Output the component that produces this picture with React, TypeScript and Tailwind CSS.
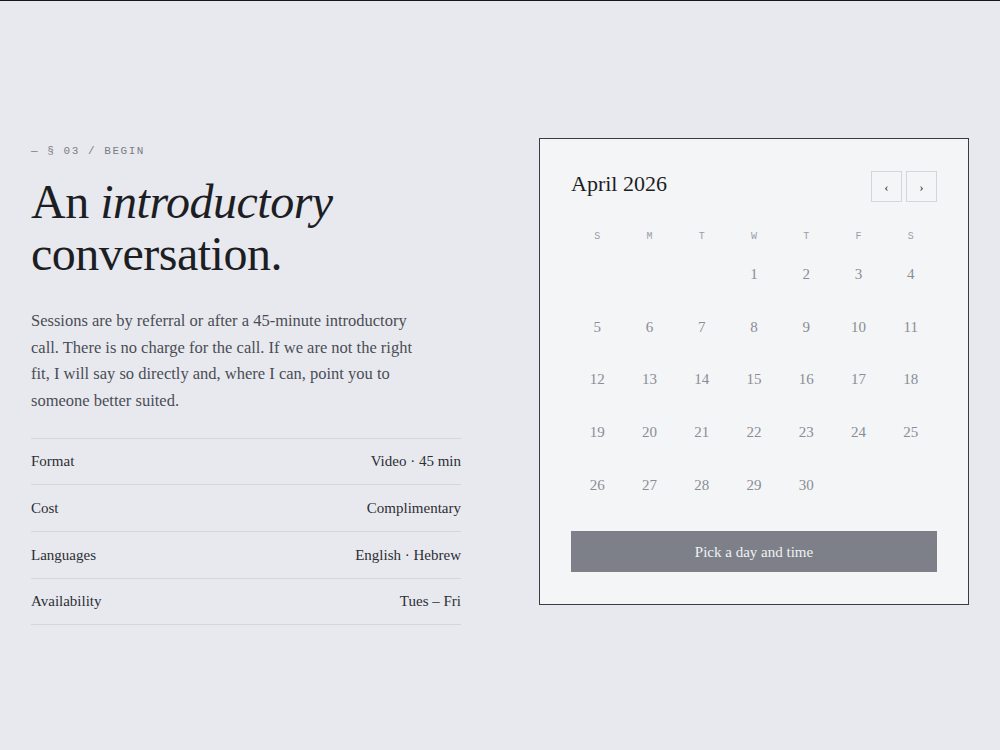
import React from "react";

const serif = { fontFamily: '"Liberation Serif", "DejaVu Serif", serif' };
const mono = { fontFamily: '"Liberation Mono", "DejaVu Sans Mono", monospace' };

const rows: [string, string][] = [
  ["Format", "Video · 45 min"],
  ["Cost", "Complimentary"],
  ["Languages", "English · Hebrew"],
  ["Availability", "Tues – Fri"],
];

const days: (number | null)[] = [null, null, null, 1, 2, 3, 4];
for (let d = 5; d <= 30; d++) days.push(d);

export default function App() {
  return (
    <div className="min-h-[750px] w-full bg-[#e8e9ee] border-t border-[#16171d]" style={serif}>
      <div className="flex gap-[78px] px-[31px] pt-[137px]">
        <div className="w-[430px] pt-[6px]">
          <div className="text-[11px] tracking-[0.14em] text-[#7a7d86] leading-[14px]" style={mono}>
            — § 03 / BEGIN
          </div>
          <h1 className="mt-[18px] text-[48px] leading-[52px] text-[#1d1e24] font-normal tracking-[-0.01em]">
            An <em className="italic">introductory</em>
            <br />
            conversation.
          </h1>
          <p className="mt-[28px] w-[400px] text-[16.5px] leading-[26.7px] text-[#4a4d56]">
            Sessions are by referral or after a 45-minute introductory call. There is no charge for the call. If we are not the right fit, I will say so directly and, where I can, point you to someone better suited.
          </p>
          <div className="mt-[23px] border-t border-[#d4d6dc]">
            {rows.map(([k, v]) => (
              <div
                key={k}
                className="flex justify-between items-center h-[46.6px] border-b border-[#d4d6dc] text-[15px] text-[#2c2e35]"
              >
                <span>{k}</span>
                <span>{v}</span>
              </div>
            ))}
          </div>
        </div>
        <div className="w-[430px] h-[467px] border border-[#3a3c44] bg-[#f4f5f7] px-[31px] pt-[32px]">
          <div className="flex items-start justify-between">
            <div className="text-[22px] text-[#1d1e24] leading-[26px]">April 2026</div>
            <div className="flex gap-[4px]">
              <button className="w-[31px] h-[31px] border border-[#d3d5da] flex items-center justify-center text-[13px] text-[#2c2e35]">
                ‹
              </button>
              <button className="w-[31px] h-[31px] border border-[#d3d5da] flex items-center justify-center text-[13px] text-[#2c2e35]">
                ›
              </button>
            </div>
          </div>
          <div className="grid grid-cols-7 mt-[29px] text-[10px] text-[#9a9da5] leading-[12px]" style={mono}>
            {["S", "M", "T", "W", "T", "F", "S"].map((d, i) => (
              <div key={i} className="text-center">
                {d}
              </div>
            ))}
          </div>
          <div className="grid grid-cols-7 mt-[5px]">
            {days.map((d, i) => (
              <div key={i} className="h-[52.7px] flex items-center justify-center text-[15px] text-[#8a8d95]">
                {d ?? ""}
              </div>
            ))}
          </div>
          <button className="mt-[20px] w-full h-[41px] bg-[#7d8089] text-[#f0f1f4] text-[15px]">
            Pick a day and time
          </button>
        </div>
      </div>
    </div>
  );
}
